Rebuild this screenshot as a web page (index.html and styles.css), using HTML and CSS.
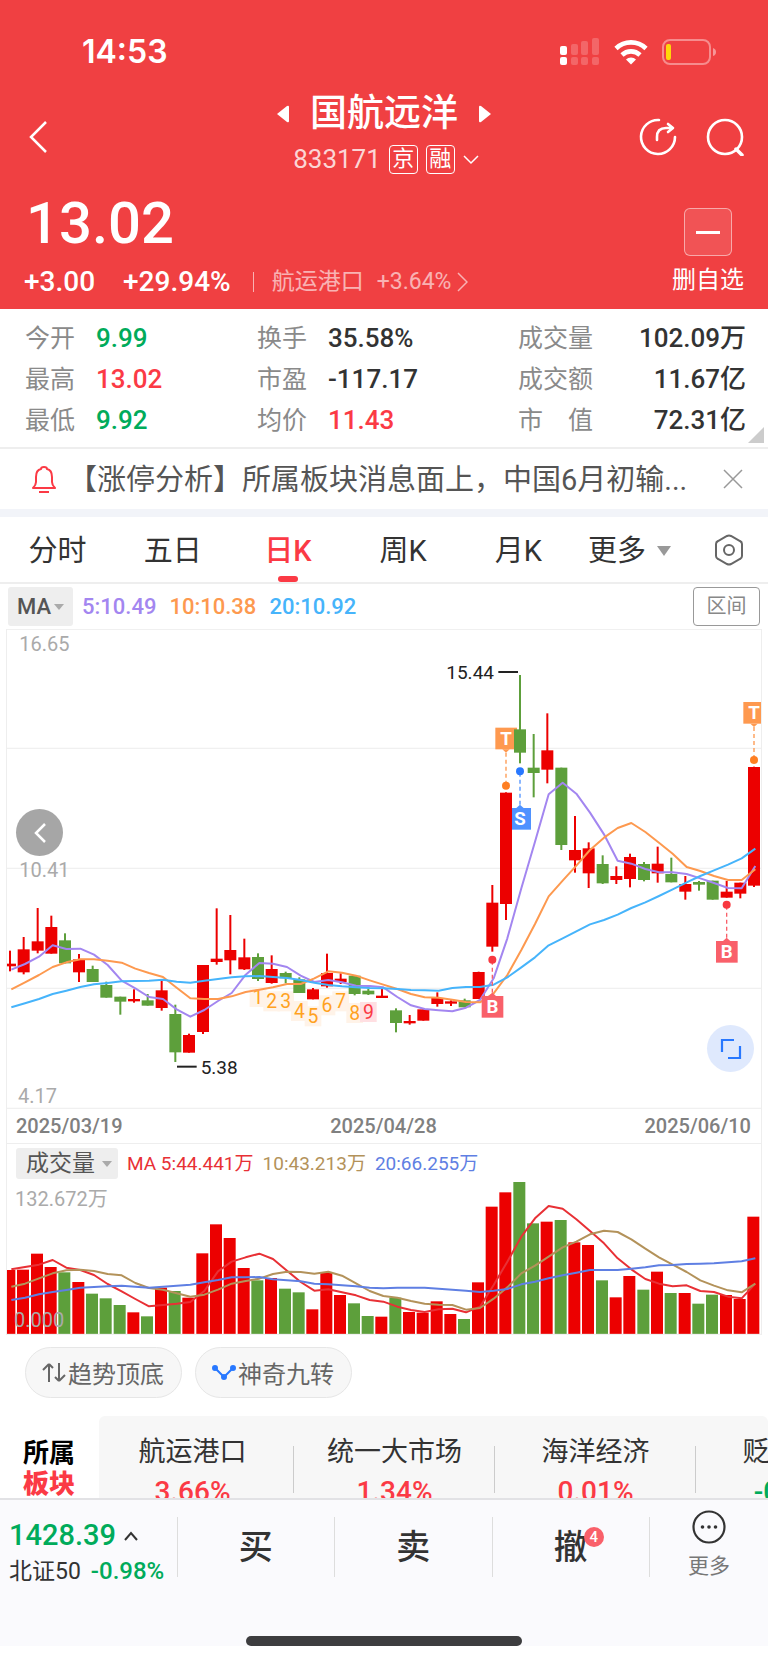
FILE: index.html
```html
<!doctype html>
<html lang="zh-CN">
<head>
<meta charset="utf-8">
<meta name="viewport" content="width=device-width, initial-scale=1">
<title>国航远洋 833171</title>
<link rel="stylesheet" href="styles.css">
</head>

<body>
<header class="header">
	<div class="status">
		<span class="time">14:53</span>
		<svg class="signal" width="40" height="28" viewBox="0 0 40 28" fill="#fff">
			<rect x="0" y="8" width="7" height="9" rx="2"/><rect x="0" y="19" width="7" height="8" rx="2"/>
			<g opacity=".2">
				<rect x="11" y="6" width="7" height="11" rx="2"/><rect x="11" y="19" width="7" height="8" rx="2"/>
				<rect x="21" y="3" width="7" height="14" rx="2"/><rect x="21" y="19" width="7" height="8" rx="2"/>
				<rect x="32" y="0" width="7" height="17" rx="2"/><rect x="32" y="19" width="7" height="8" rx="2"/>
			</g>
		</svg>
		<svg class="wifi" width="34" height="26" viewBox="0 0 34 26">
			<path d="M2 9.500a21.500 21.500 0 0 1 30 0M8 16a13 13 0 0 1 18 0" fill="none" stroke="#fff" stroke-width="4.600"/>
			<path d="M17 25.500l-5-5a7 7 0 0 1 10 0z" fill="#fff"/>
		</svg>
		<svg class="battery" width="54" height="26" viewBox="0 0 54 26">
			<rect x="1" y="1" width="47" height="24" rx="7" fill="none" stroke="#fff" stroke-opacity=".4" stroke-width="2"/>
			<rect x="4" y="5" width="5" height="16" rx="2" fill="#ffd60a"/>
			<path d="M51 9q3 1 3 4t-3 4z" fill="#fff" opacity=".45"/>
		</svg>
	</div>
	<nav class="nav">
		<button class="icon-btn back" aria-label="返回">
			<svg width="20" height="34" viewBox="0 0 20 34"><path d="M18 2L3 17l15 15" fill="none" stroke="#fff" stroke-width="2.500"/></svg>
		</button>
		<div class="stock">
			<h1>
				<button class="icon-btn" aria-label="上一只"><svg width="13" height="18" viewBox="0 0 13 18"><path d="M0 9L10 1q2-1 2 1v14q0 2-2 1z" fill="#fff"/></svg></button>
				国航远洋
				<button class="icon-btn" aria-label="下一只"><svg width="13" height="18" viewBox="0 0 13 18"><path d="M13 9L3 1Q1 0 1 2v14q0 2 2 1z" fill="#fff"/></svg></button>
			</h1>
			<p class="code">833171 <i>京</i><i>融</i>
				<svg width="16" height="10" viewBox="0 0 16 10"><path d="M1 1l7 7 7-7" fill="none" stroke="#fff" stroke-width="1.500"/></svg>
			</p>
		</div>
		<div class="tools">
			<button class="icon-btn" aria-label="分享">
				<svg width="38" height="38" viewBox="0 0 38 38" fill="none" stroke="#fff" stroke-width="2.600" stroke-linecap="round" stroke-linejoin="round"><path d="M20 2A17 17 0 1 0 36 19"/><path d="M18 22v-3q0-9 9-9h6M29 6l5 4-5 4"/></svg>
			</button>
			<button class="icon-btn" aria-label="搜索">
				<svg width="38" height="38" viewBox="0 0 38 38" fill="none" stroke="#fff" stroke-width="2.600"><circle cx="19" cy="19" r="17"/><path d="M30 31l6 6" stroke-width="3.500" stroke-linecap="round"/></svg>
			</button>
		</div>
	</nav>
	<div class="quote">
		<div>
			<strong class="price">13.02</strong>
			<p class="change"><span>+3.00</span><span>+29.94%</span><a href="#board">航运港口<em>+3.64%</em><svg width="11" height="20" viewBox="0 0 11 20"><path d="M1 1l9 9-9 9" fill="none" stroke="#fff" stroke-width="1.500"/></svg></a></p>
		</div>
		<button class="remove"><span><b></b></span>删自选</button>
	</div>
</header>

<section class="stats">
	<dl>
		<dt>今开</dt><dd class="green">9.99</dd>
		<dt>最高</dt><dd class="red">13.02</dd>
		<dt>最低</dt><dd class="green">9.92</dd>
	</dl>
	<dl>
		<dt>换手</dt><dd>35.58%</dd>
		<dt>市盈</dt><dd>-117.17</dd>
		<dt>均价</dt><dd class="red">11.43</dd>
	</dl>
	<dl class="wide">
		<dt>成交量</dt><dd>102.09万</dd>
		<dt>成交额</dt><dd>11.67亿</dd>
		<dt>市　值</dt><dd>72.31亿</dd>
	</dl>
</section>

<section class="news">
	<svg width="24" height="28" viewBox="0 0 24 28" fill="none" stroke="#fb3a45" stroke-width="2"><path d="M1 23q3-3 3-6v-5q0-7 5-8 0-2 3-2t3 2q5 1 5 8v5q0 3 3 6zM7 27h10" stroke-linejoin="round"/></svg>
	<p>【涨停分析】所属板块消息面上，中国6月初输...</p>
	<button class="icon-btn" aria-label="关闭"><svg width="20" height="20" viewBox="0 0 20 20"><path d="M1 1l18 18M19 1L1 19" stroke="#999" stroke-width="1.500"/></svg></button>
</section>

<nav class="tabs">
	<button>分时</button>
	<button>五日</button>
	<button class="on">日K</button>
	<button>周K</button>
	<button>月K</button>
	<button class="more">更多</button>
	<button class="set" aria-label="设置">
		<svg width="30" height="32" viewBox="0 0 30 32" fill="none" stroke="#666" stroke-width="2"><path d="M13 2q2-1 4 0l9 5q2 1 2 3v12q0 2-2 3l-9 5q-2 1-4 0l-9-5q-2-1-2-3V10q0-2 2-3z"/><circle cx="15" cy="16" r="5"/></svg>
	</button>
</nav>

<div class="ma">
	<label class="pick"><select aria-label="主图指标"><option>MA</option></select></label>
	<span class="ma5">5:10.49</span>
	<span class="ma10">10:10.38</span>
	<span class="ma20">20:10.92</span>
	<button>区间</button>
</div>

<main class="chart">
	<div class="kline">
		<svg id="kline" viewBox="21 27 2262 1440" role="img" aria-label="日K线图"></svg>
		<button class="round prev" aria-label="向前"><svg width="12" height="20" viewBox="0 0 12 20"><path d="M11 1l-9 9 9 9" fill="none" stroke="#fff" stroke-width="2.500"/></svg></button>
		<button class="round full" aria-label="全屏"><svg width="22" height="22" viewBox="0 0 22 22"><path d="M14 2H2v12M20 8v12H8" fill="none" stroke="#2878ff" stroke-width="2.200"/></svg></button>
	</div>
	<div class="dates"><span>2025/03/19</span><span>2025/04/28</span><span>2025/06/10</span></div>
	<div class="vol-head">
		<label class="pick"><select aria-label="副图指标"><option>成交量</option></select></label>
		<span class="vol5">MA 5:44.441万</span>
		<span class="vol10">10:43.213万</span>
		<span class="vol20">20:66.255万</span>
	</div>
	<svg id="volume" viewBox="21 243 2262 462" role="img" aria-label="成交量图"></svg>
</main>

<div class="chips">
	<button><svg width="24" height="22" viewBox="0 0 24 22" fill="none" stroke="#666" stroke-width="2"><path d="M7 20V2M1 8l6-6M17 1v18M17 19l6-6M7 2l4 4M17 19l-4-4"/></svg>趋势顶底</button>
	<button><svg width="24" height="18" viewBox="0 0 24 18" fill="#2878ff" stroke="#2878ff" stroke-width="2"><path d="M3 4l9 9 9-9" fill="none"/><circle cx="3" cy="4" r="2"/><circle cx="12" cy="13" r="2"/><circle cx="21" cy="4" r="2"/></svg>神奇九转</button>
</div>

<section class="board" id="board">
	<h2>所属<b>板块</b></h2>
	<ul>
		<li><a href="#board">航运港口<b class="red">3.66%</b></a></li>
		<li><a href="#board">统一大市场<b class="red">1.34%</b></a></li>
		<li><a href="#board">海洋经济<b class="red">0.01%</b></a></li>
		<li><a href="#board">贬值受益<b class="green">-0.25%</b></a></li>
	</ul>
</section>

<footer class="footer">
	<div class="bar">
		<button class="index">
			<strong>1428.39<svg width="14" height="10" viewBox="0 0 14 10"><path d="M1 9l6-7 6 7" fill="none" stroke="#333" stroke-width="2"/></svg></strong>
			<span>北证50<em>-0.98%</em></span>
		</button>
		<button class="trade">买</button>
		<button class="trade">卖</button>
		<button class="trade"><span>撤<i>4</i></span></button>
		<button class="others">
			<svg width="34" height="34" viewBox="0 0 34 34"><circle cx="17" cy="17" r="15.500" fill="none" stroke="#333" stroke-width="2.200"/><g fill="#333"><circle cx="10.500" cy="17" r="1.800"/><circle cx="17" cy="17" r="1.800"/><circle cx="23.500" cy="17" r="1.800"/></g></svg>
			更多
		</button>
	</div>
	<div class="home"></div>
</footer>
<script src="chart.js"></script>
</body>
</html>
```
FILE: styles.css
```css
*{margin:0; padding:0; box-sizing:border-box;}
body{background:#fff; color:#333; font-family:Roboto,"Noto Sans CJK SC",sans-serif; overflow-x:hidden;}
button,select{border:0; background:none; color:inherit; font:inherit;}
ul{list-style:none;}
i,em{font-style:normal;}
a{color:inherit; text-decoration:none;}
svg{display:block; flex:none;}
.red{color:#fb3a45;}
.green{color:#00ab5b;}
.icon-btn{display:flex;}

.header{background:#f04042; color:#fff; padding:33px 24px 6px;}
.status{display:flex; align-items:center; padding:0 28px 0 58px; line-height:37px;}
.time{font-family:Inter,sans-serif; font-size:32px; font-weight:600; margin-right:auto;}
.wifi{margin:0 14px;}
.nav{display:grid; grid-template-columns:1fr auto 1fr; align-items:center; padding-top:21px;}
.back{padding-left:4px;}
.stock h1{display:flex; align-items:center; justify-content:center; gap:20px; font-size:37px; font-weight:500; line-height:46px;}
.code{display:flex; align-items:center; justify-content:center; gap:8px; padding-left:4px; font-size:26px; line-height:45px; color:rgba(255,255,255,.8);}
.code i{width:29px; height:29px; border:1px solid #fff; border-radius:4px; font-size:22px; line-height:26px; text-align:center; color:#fff;}
.tools{display:flex; justify-content:flex-end; gap:29px;}
.quote{display:flex; justify-content:space-between; align-items:flex-end; padding-top:3px;}
.price{display:block; padding-left:2px; font-size:58px; font-weight:500; line-height:76px;}
.change{display:flex; align-items:center; gap:28px; font-size:28px; font-weight:500; line-height:42px; white-space:nowrap;}
.change a{display:flex; align-items:center; font-size:23px; font-weight:400; opacity:.6; margin-left:-6px;}
.change a:before{content:""; width:1px; height:20px; margin-right:18px; background:#fff;}
.change em{margin:0 6px 0 13px;}
.remove{font-size:24px; line-height:36px; padding-bottom:5px;}
.remove span{display:flex; align-items:center; justify-content:center; width:48px; height:48px; margin:0 auto 6px; border:1px solid rgba(255,255,255,.5); border-radius:6px; background:rgba(255,255,255,.1);}
.remove b{width:24px; height:3px; background:#fff;}

.stats{position:relative; display:grid; grid-template-columns:232fr 261fr 228fr; padding:9px 22px 6px 25px; border-bottom:2px solid #eee;}
.stats dl{display:grid; grid-template-columns:71px 1fr; line-height:41px;}
.stats dt{font-size:25px; font-weight:400; color:#8a8a8a;}
.stats dd{font-size:26px; font-weight:500;}
.stats .wide{grid-template-columns:80px 1fr;}
.stats .wide dd{text-align:right;}
.stats:after{content:""; position:absolute; right:4px; bottom:4px; border:solid transparent; border-width:8px; border-right-color:#ccc; border-bottom-color:#ccc;}
.news{display:flex; align-items:center; padding:0 25px 0 32px; line-height:58px; border-bottom:8px solid #f2f4f9; color:#555;}
.news p{flex:1; margin-left:12px; padding-top:2px; font-size:29px; white-space:nowrap; overflow:hidden;}

.tabs{display:flex; border-bottom:2px solid #eee; font-size:29px; line-height:62px;}
.tabs button{width:15%; padding-top:3px;}
.tabs .on{position:relative; color:#fb3a45; font-weight:500;}
.tabs .on:after{content:""; position:absolute; left:50%; bottom:0; width:20px; height:6px; margin-left:-10px; border-radius:3px; background:#fb3a45;}
.tabs .more{display:flex; align-items:center; flex:1; width:auto; padding-left:12px;}
.more:after{content:""; border:solid transparent; border-width:10px 7px 0; border-top-color:#999; margin-left:11px;}
.tabs .set{display:flex; align-items:center; width:auto; padding:0 24px 0 0;}

.ma{display:flex; align-items:center; padding:3px 8px; font-size:22px; line-height:37px;}
.ma span{margin-right:13px; font-weight:500;}
.ma button{width:67px; height:39px; margin-left:auto; border:1px solid #999; border-radius:4px; font-size:20px; color:#888;}
.pick{position:relative; display:flex; align-items:center; height:39px; margin-right:9px; padding:0 9px; border-radius:3px; background:#eee; color:#555;}
.pick select{appearance:none; font-weight:500;}
.pick:after{content:""; border:solid transparent; border-width:6px 5px 0; border-top-color:#aaa; margin-left:2px;}
.ma .ma5{color:#a386f0;}
.ma .ma10{color:#fd994f;}
.ma .ma20{color:#46b4fb;}

.chart{margin:0 6px; border:solid #eee; border-width:0 1px;}
.chart svg{width:100%;}
.chart text{font-family:Roboto,"Noto Sans CJK SC",sans-serif;}
.kline{position:relative;}
.round{position:absolute; display:flex; align-items:center; justify-content:center; width:47px; height:47px; border-radius:50%;}
.chart .round svg{width:auto;}
.prev{left:9px; top:180px; background:#a6a6a6;}
.full{right:7px; bottom:37px; background:#dfe9fd;}
.dates{display:flex; justify-content:space-between; padding:1px 10px 0 9px; border-bottom:1px solid #eee; font-size:20px; font-weight:500; line-height:33px; color:#808080;}
.vol-head{display:flex; align-items:center; gap:9px; padding:4px 9px 2px; font-size:19px; line-height:31px;}
.vol-head .pick{height:31px; margin:0; padding:0 6px 0 10px; font-size:23px;}
.vol-head .pick select{font-weight:400;}
.vol-head .pick:after{margin-left:7px;}
.vol5{color:#e83035;}
.vol10{color:#b3925a;}
.vol20{color:#5f7fe3;}

.chips{display:flex; gap:13px; padding:12px 25px 18px;}
.chips button{display:flex; align-items:center; gap:2px; padding:0 17px 0 16px; height:51px; border:1px solid #e6e6e6; border-radius:26px; background:#f7f7f7; color:#666; font-size:24px;}
.board{display:flex; height:82px; overflow:hidden;}
.board h2{flex:none; width:99px; padding:22px 0 0 23px; color:#000; font-size:26px; font-weight:700; line-height:31px;}
.board h2 b{display:block; color:#fb3a45;}
.board ul{display:flex; flex:1; overflow:hidden; border-radius:6px 6px 0 0; background:#f7f7f7;}
.board li{position:relative; flex:none; width:201px; padding-top:16px; text-align:center; font-size:27px; line-height:40px;}
.board li:first-child{width:195px; padding-right:8px;}
.board li:after{content:""; position:absolute; right:0; top:30px; width:1px; height:47px; background:#ccc;}
.board li b{display:block; font-size:28px; font-weight:500;}

.footer{border-top:2px solid #e2e2e5; background:#fafafd;}
.bar{display:flex; padding-top:17px;}
.bar button{height:60px;}
.index{width:23%; padding-left:9px; text-align:left; white-space:nowrap;}
.index strong{display:flex; align-items:center; gap:8px; color:#00ab5b; font-size:29px; font-weight:500; line-height:37px;}
.index span{display:block; font-size:23px; line-height:35px;}
.index em{margin-left:10px; color:#00ab5b; font-size:24px; font-weight:500;}
.bar .trade{width:20.5%; border-left:1px solid #ddd; font-size:34px; font-weight:500; line-height:60px;}
.trade span{position:relative;}
.trade i{position:absolute; right:-16px; top:0; width:20px; height:20px; border-radius:50%; background:#f9606a; color:#fff; font-size:15px; line-height:20px;}
.bar .others{flex:1; border-left:1px solid #ddd; color:#777; font-size:21px; line-height:36px;}
.others svg{margin:-7px auto 4px;}
.home{width:36%; height:10px; margin:59px auto 17px; border-radius:5px; background:#3d3d3f;}
```
FILE: chart.js
```js
var RED = '#ec0000';
var GREEN = '#5d9f3b';
var STEP = 41.34;

// high, body top, body bottom, low, up
var candles = [
	[992,1031,1039,1054,1],[951,988,1057,1063,1],[864,964,992,1000,1],[887,921,1001,1001,1],[940,961,1030,1030,0],
	[1002,1018,1057,1086,1],[1037,1047,1086,1086,0],[1085,1095,1133,1133,0],[1130,1130,1145,1184,0],[1108,1137,1144,1148,1],
	[1122,1141,1157,1157,0],[1081,1111,1164,1172,1],[1154,1182,1297,1326,0],[1241,1245,1298,1298,1],[1035,1035,1236,1242,1],
	[865,1016,1026,1034,1],[885,990,1021,1063,1],[956,1012,1048,1050,1],[1000,1011,1077,1083,0],[1006,1047,1089,1091,1],
	[1055,1059,1075,1090,0],[1072,1078,1119,1119,0],[1104,1108,1138,1138,1],[1001,1059,1099,1103,1],[1060,1076,1086,1092,1],
	[1067,1067,1122,1126,0],[1106,1112,1123,1125,0],[1107,1127,1134,1134,1],[1165,1171,1209,1237,0],[1185,1203,1210,1214,1],
	[1168,1168,1202,1202,1],[1117,1134,1152,1160,1],[1141,1144,1151,1158,1],[1136,1141,1162,1162,0],[1055,1056,1137,1137,1],
	[795,848,980,995,1],[517,518,852,900,1],[165,328,398,430,0],[342,443,459,532,0],[280,391,449,490,1],
	[443,443,675,690,0],[588,690,721,758,1],[667,685,760,804,1],[706,732,790,792,0],[739,768,780,792,1],
	[701,711,777,802,1],[726,732,780,784,0],[680,731,760,788,1],[713,762,787,787,0],[768,792,815,839,1],
	[783,786,794,812,0],[782,782,839,839,0],[783,815,833,833,1],[788,788,821,835,1],[440,441,797,801,1]
];
var ma5 = [1049,1032,1010,976,987,986,1004,1035,1082,1105,1131,1137,1168,1190,1170,1143,1119,1064,1029,1031,1041,1067,1086,1080,1087,1097,1098,1102,1131,1156,1167,1171,1174,1163,1140,1075,955,805,665,523,488,521,578,643,722,731,747,757,757,762,775,789,804,805,738];
var ma10 = [1108,1087,1065,1041,1027,1018,1018,1022,1028,1046,1059,1071,1103,1135,1137,1137,1129,1116,1109,1102,1092,1092,1075,1054,1058,1067,1081,1094,1107,1122,1132,1133,1139,1146,1147,1120,1065,990,912,829,782,737,690,653,624,609,636,668,701,741,753,768,780,780,748];
var ma20 = [1162,1150,1137,1122,1112,1101,1093,1089,1084,1083,1082,1079,1085,1088,1082,1077,1072,1069,1068,1071,1074,1080,1088,1095,1099,1102,1104,1105,1107,1110,1111,1112,1104,1101,1101,1094,1072,1042,1012,976,955,934,913,900,884,864,847,828,808,787,768,751,734,715,686];

var vols = [510,509,461,501,517,546,581,595,615,637,649,563,573,593,460,373,414,504,541,534,566,577,628,517,585,610,648,650,593,636,638,604,642,657,547,320,277,246,370,365,360,427,435,541,592,528,569,515,579,579,611,584,585,597,350];
var vol5 = [508,501,494,480,503,510,525,552,574,597,619,615,611,606,573,514,485,472,461,477,512,546,572,568,577,586,600,605,620,630,636,628,626,637,620,555,485,410,355,318,326,358,393,430,475,508,537,551,559,556,573,576,590,595,551];
var vol10 = [560,551,535,520,511,509,513,522,526,549,564,569,580,590,584,569,551,543,536,522,515,516,521,515,527,550,573,588,593,603,611,614,615,629,624,596,562,520,497,470,442,425,403,392,396,418,446,472,494,516,541,557,571,577,551];
var vol20 = [600,593,583,576,570,563,561,559,557,560,563,560,557,554,547,540,532,532,531,538,541,544,551,553,556,559,563,565,563,563,563,566,569,572,576,572,567,553,545,535,526,518,510,510,510,506,502,496,495,492,491,490,487,484,475];

function cx(i){
	return Math.round(30+i*STEP);
}
function rect(x,y,w,h,fill){
	return '<rect x="'+x+'" y="'+y+'" width="'+w+'" height="'+h+'" fill="'+fill+'"/>';
}
function text(x,y,size,fill,str,anchor){
	return '<text x="'+x+'" y="'+y+'" font-size="'+size+'" fill="'+fill+'" text-anchor="'+(anchor||'start')+'">'+str+'</text>';
}
function hline(x1,x2,y,color,w){
	return '<path d="M'+x1+' '+y+'H'+x2+'" stroke="'+color+'" stroke-width="'+w+'"/>';
}
function curve(list,color){
	var pts = [];
	for(var i=0;i<list.length;i++){
		pts.push((cx(i)+4)+','+list[i]);
	}
	return '<polyline points="'+pts.join(' ')+'" fill="none" stroke="'+color+'" stroke-width="6" stroke-linejoin="round"/>';
}
// T / S / B flag, its box hangs above or below the dot
function flag(i,letter,boxY,dotY,color,dot){
	var x = cx(i);
	var above = boxY<dotY;
	var edge = above?boxY+65:boxY;
	var tip = above?edge+10:edge-10;
	return '<path d="M'+x+' '+tip+'V'+dotY+'" stroke="'+color+'" stroke-width="4" stroke-dasharray="12 9"/>'+
		'<circle cx="'+x+'" cy="'+dotY+'" r="12" fill="'+dot+'"/>'+
		rect(x-32,boxY,65,65,color)+
		'<path d="M'+(x-11)+' '+edge+'H'+(x+11)+'L'+x+' '+tip+'z" fill="'+color+'"/>'+
		'<text x="'+x+'" y="'+(boxY+52)+'" font-size="56" font-weight="700" fill="#fff" text-anchor="middle">'+letter+'</text>';
}

function drawKline(){
	var s = '';
	var grid = [28,385,745,1105,1465];
	for(var i=0;i<grid.length;i++){
		s += hline(21,2283,grid[i],'#f0f0f0',4);
	}
	s += text(58,93,60,'#aaa','16.65')+text(58,770,60,'#aaa','10.41')+text(54,1448,60,'#aaa','4.17');
	s += flag(36,'T',323,497,'#fe994f','#fe7f22');
	s += flag(37,'S',564,454,'#4f92ff','#2878ff');
	s += flag(54,'T',246,420,'#fe994f','#fe7f22');
	s += flag(52,'B',963,854,'#f9606a','#f8383f');
	var nine = [1130,1143,1143,1172,1188,1155,1143,1178,1175];
	for(i=0;i<9;i++){
		s += rect(cx(18+i)-25,nine[i]-29,50,60,i==8?'#ffdfe2':'#fff3e8');
	}
	for(i=0;i<9;i++){
		s += text(cx(18+i),nine[i]+21,58,i==8?'#fb3a45':'#ffa21f',i+1,'middle');
	}
	for(i=0;i<candles.length;i++){
		var c = candles[i];
		var color = c[4]?RED:GREEN;
		s += rect(cx(i)-3,c[0],6,c[3]-c[0],color)+rect(cx(i)-18,c[1],36,c[2]-c[1],color);
	}
	s += curve(ma5,'#a386f0')+curve(ma10,'#fd994f')+curve(ma20,'#46b4fb');
	s += flag(35,'B',1128,1019,'#f9606a','#f8383f');
	s += hline(1495,1554,156,'#222',6)+text(1482,178,57,'#222','15.44','end');
	s += hline(531,590,1340,'#222',6)+text(602,1362,57,'#222','5.38');
	document.getElementById('kline').innerHTML = s;
}

function drawVolume(){
	var s = text(45,318,60,'#aaa','132.672万');
	for(var i=0;i<vols.length;i++){
		s += rect(cx(i)-20,vols[i],36,702-vols[i],candles[i][4]?RED:GREEN);
	}
	s += curve(vol5,'#e83035')+curve(vol10,'#b3925a')+curve(vol20,'#5f7fe3');
	s += text(42,681,60,'#aaa','0.000')+hline(21,2283,703,'#eee',3);
	document.getElementById('volume').innerHTML = s;
}

drawKline();
drawVolume();
```
